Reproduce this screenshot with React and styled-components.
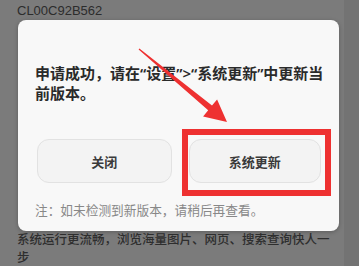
import React from "react";
import styled, { createGlobalStyle } from "styled-components";

const Global = createGlobalStyle`
  html, body { margin: 0; padding: 0; background: #7b7b7b; }
  * { box-sizing: border-box; }
`;

const CJK = `"Noto Sans", "Noto Sans CJK SC", sans-serif`;

const Page = styled.div`
  position: relative;
  width: 359px;
  height: 266px;
  overflow: hidden;
  background: linear-gradient(to right, #7b7b7b 0 344px, #737373 344px);
  font-family: ${CJK};
  display: flex;
  flex-direction: column;
`;

const ModelText = styled.div`
  padding: 3px 0 0 17px;
  font-family: "Liberation Sans", Arial, sans-serif;
  font-size: 13px;
  line-height: 16px;
  color: #2c2c2c;
`;

const Dialog = styled.div`
  margin: 1px 0 0 18px;
  width: 321px;
  height: 211px;
  flex: none;
  background: #f8f8f8;
  border-radius: 8px;
  box-shadow: 0 1px 4px rgba(0, 0, 0, 0.25);
  padding: 43px 18px 0 17px;
  display: flex;
  flex-direction: column;
`;

const Message = styled.div`
  font-size: 15px;
  line-height: 20px;
  font-weight: 600;
  color: #2a2a2a;
  white-space: nowrap;
`;

const Buttons = styled.div`
  margin-top: 36px;
  padding-left: 2px;
  display: flex;
  gap: 17px;
`;

const Highlight = styled.div`
  position: relative;
  flex: 1;
  display: flex;
  &::after {
    content: "";
    position: absolute;
    left: -7px;
    right: -10px;
    top: -10px;
    bottom: -13px;
    border: 6px solid #ee3131;
    pointer-events: none;
  }
`;

const Button = styled.div`
  flex: 1;
  height: 44px;
  border: 1px solid #e2e2e2;
  border-radius: 12px;
  background: #f3f3f3;
  display: flex;
  align-items: center;
  justify-content: center;
  font-size: 13px;
  font-weight: 600;
  color: #3a3a3a;
`;

const Note = styled.div`
  margin-top: 18px;
  font-size: 12.7px;
  line-height: 18px;
  color: #888;
  white-space: nowrap;
`;

const BodyText = styled.div`
  padding-left: 17px;
  font-size: 12.5px;
  line-height: 18px;
  font-weight: 500;
  color: #2e2e2e;
  white-space: nowrap;
`;

const Arrow = styled.svg`
  position: absolute;
  left: 0;
  top: 0;
  pointer-events: none;
`;

export default function App() {
  return (
    <>
      <Global />
      <Page>
        <ModelText>CL00C92B562</ModelText>
        <Dialog>
          <Message>
            申请成功，请在“设置”&gt;“系统更新”中更新当
            <br />
            前版本。
          </Message>
          <Buttons>
            <Button>关闭</Button>
            <Highlight>
              <Button>系统更新</Button>
            </Highlight>
          </Buttons>
          <Note>注：如未检测到新版本，请稍后再查看。</Note>
        </Dialog>
        <BodyText>
          系统运行更流畅，浏览海量图片、网页、搜索查询快人一
          <br />
          步
        </BodyText>
        <Arrow width="359" height="266" viewBox="0 0 359 266">
          <polygon
            fill="#ee3131"
            points="138.6,49.5 208.2,110.2 203.1,116.4 227,122 217.1,99.4 212,105.6 139.4,48.5"
          />
        </Arrow>
      </Page>
    </>
  );
}
